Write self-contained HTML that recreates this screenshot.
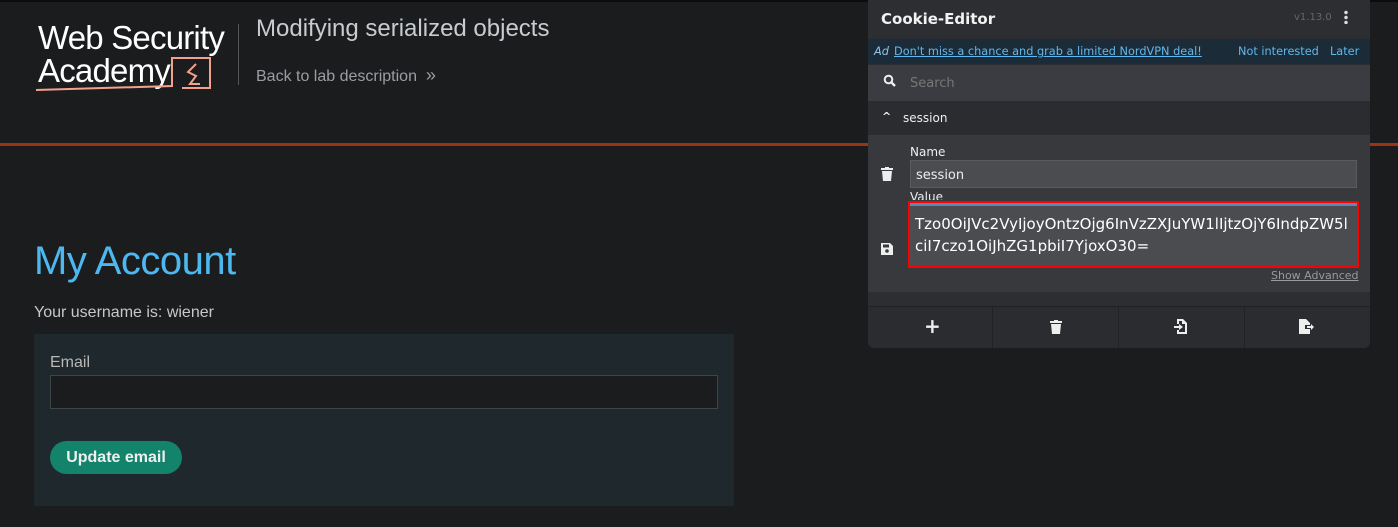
<!DOCTYPE html>
<html><head><meta charset="utf-8"><style>
*{box-sizing:border-box;margin:0;padding:0}
body{width:1398px;height:527px;background:#1b1c1e;font-family:"Liberation Sans",sans-serif;position:relative;overflow:hidden}
.abs{position:absolute}
.ce{font-family:"DejaVu Sans","Liberation Sans",sans-serif}
</style></head><body>
<div class="abs" style="left:0;top:0;width:1398px;height:2px;background:#0c0c0d"></div>
<!-- logo -->
<div class="abs" style="left:38px;top:21px;color:#fff;font-size:33px;letter-spacing:-0.8px;line-height:33px">Web Security<br>Academy</div>
<svg class="abs" style="left:34px;top:56px" width="190" height="38" viewBox="0 0 190 38">
<path d="M2 34 Q60 32 138 30 L138 2 L176 2 L176 32 L148 32" fill="none" stroke="#f3a08c" stroke-width="2"/>
<path d="M162 8 L154 16 L162 20 L156 28 L166 28" fill="none" stroke="#f3a08c" stroke-width="2"/>
</svg>
<div class="abs" style="left:238px;top:24px;width:1px;height:61px;background:#555"></div>
<div class="abs" style="left:256px;top:15px;color:#c8ccd0;font-size:24px">Modifying serialized objects</div>
<div class="abs" style="left:256px;top:65px;color:#9a9ea3;font-size:16px">Back to lab description &nbsp;<span style="font-size:18px">»</span></div>
<div class="abs" style="left:0;top:143px;width:1398px;height:3px;background:#9c3410"></div>
<!-- content -->
<div class="abs" style="left:34px;top:239px;color:#4db8ef;font-size:40px;letter-spacing:-0.5px">My Account</div>
<div class="abs" style="left:34px;top:304px;color:#c8c8c8;font-size:16px">Your username is: wiener</div>
<div class="abs" style="left:34px;top:334px;width:700px;height:172px;background:#1f282d"></div>
<div class="abs" style="left:50px;top:354px;color:#b8b8b8;font-size:16px">Email</div>
<div class="abs" style="left:50px;top:375px;width:668px;height:34px;background:#1b1c1e;border:1px solid #3f4446"></div>
<div class="abs" style="left:50px;top:441px;width:132px;height:33px;background:#13836c;border-radius:17px;color:#f0f0f0;font-weight:bold;font-size:16px;text-align:center;line-height:34px">Update email</div>
<!-- cookie editor -->
<div class="abs ce" style="left:868px;top:0;width:502px;height:348px;background:#2d2e32;border-radius:0 0 6px 6px;overflow:hidden">
 <div class="abs" style="left:13px;top:10px;color:#f2f2f2;font-weight:bold;font-size:15px">Cookie-Editor</div>
 <div class="abs" style="left:426px;top:12px;color:#666;font-size:10px">v1.13.0</div>
 <div class="abs" style="left:476px;top:10px;width:4px;height:14px;background:radial-gradient(circle,#ddd 1.5px,transparent 2px) 0 0/4px 5px"></div>
 <div class="abs" style="left:0;top:39px;width:502px;height:25px;background:#1b2b38;font-size:11.3px;line-height:25px">
  <span class="abs" style="left:6px;color:#8fc5ea;font-style:italic">Ad</span>
  <span class="abs" style="left:26px;color:#61b8ec;text-decoration:underline">Don't miss a chance and grab a limited NordVPN deal!</span>
  <span class="abs" style="left:370px;color:#61b8ec">Not interested</span>
  <span class="abs" style="left:462px;color:#61b8ec">Later</span>
 </div>
 <div class="abs" style="left:0;top:65px;width:502px;height:36px;background:#3a3c41"></div>
 <svg class="abs" style="left:15px;top:74px" width="14" height="14" viewBox="0 0 14 14"><circle cx="5.5" cy="5.5" r="3.8" fill="none" stroke="#eee" stroke-width="2"/><path d="M8.5 8.5L12 12" stroke="#eee" stroke-width="2.4"/></svg>
 <div class="abs" style="left:42px;top:76px;color:#777;font-size:13px">Search</div>
 <div class="abs" style="left:0;top:101px;width:502px;height:34px;background:#2b2c30"></div>
 <div class="abs" style="left:14px;top:110px;color:#eee;font-size:11px;font-weight:bold">^</div>
 <div class="abs" style="left:35px;top:111px;color:#eee;font-size:12px">session</div>
 <div class="abs" style="left:0;top:135px;width:502px;height:157px;background:#38393d"></div>
 <div class="abs" style="left:42px;top:145px;color:#eee;font-size:12px">Name</div>
 <div class="abs" style="left:42px;top:160px;width:447px;height:28px;background:#4b4c50;border:1px solid #5a5b5f;color:#eee;font-size:13px;padding:7px 5px">session</div>
 <div class="abs" style="left:42px;top:190px;color:#eee;font-size:12px;height:10px;overflow:hidden">Value</div>
 <div class="abs" style="left:40px;top:201px;width:451px;height:67px;background:#4b4c50;border:2px solid #f00;color:#fff;font-size:15px;line-height:22px;padding:10px 5px;word-break:break-all;box-shadow:inset 0 3px 0 #5d87b8">Tzo0OiJVc2VyIjoyOntzOjg6InVzZXJuYW1lIjtzOjY6IndpZW5lciI7czo1OiJhZG1pbiI7YjoxO30=</div>
 <div class="abs" style="left:403px;top:269px;color:#999;font-size:11px;text-decoration:underline">Show Advanced</div>
 <svg class="abs" style="left:13px;top:167px" width="12" height="14" viewBox="0 0 12 14"><rect x="0" y="1" width="12" height="2" fill="#eee"/><rect x="4" y="0" width="4" height="2" fill="#eee"/><path d="M1 4h10l-1 10H2z" fill="#eee"/></svg>
 <svg class="abs" style="left:13px;top:243px" width="12" height="12" viewBox="0 0 12 12"><path d="M0 0h9l3 3v9H0z" fill="#eee"/><rect x="2" y="1.5" width="6" height="3" fill="#38393d"/><circle cx="6" cy="8" r="1.8" fill="#38393d"/></svg>
 <div class="abs" style="left:0;top:306px;width:502px;height:42px;background:#2b2c30;border-top:1px solid #222"></div>
 <div class="abs" style="left:124px;top:307px;width:1px;height:41px;background:#222"></div>
 <div class="abs" style="left:250px;top:307px;width:1px;height:41px;background:#222"></div>
 <div class="abs" style="left:376px;top:307px;width:1px;height:41px;background:#222"></div>
 <div class="abs" style="left:56px;top:314px;color:#eee;font-size:20px;font-weight:bold">+</div>
 <svg class="abs" style="left:182px;top:320px" width="12" height="14" viewBox="0 0 12 14"><rect x="0" y="1" width="12" height="2" fill="#eee"/><rect x="4" y="0" width="4" height="2" fill="#eee"/><path d="M1 4h10l-1 10H2z" fill="#eee"/></svg>
 <svg class="abs" style="left:306px;top:319px" width="14" height="15" viewBox="0 0 14 15"><path d="M3 0h6l4 4v11H3v-4h2v2h6V5H8V2H5v3H3z" fill="#eee"/><path d="M0 7h5V5l4 3-4 3V9H0z" fill="#eee"/></svg>
 <svg class="abs" style="left:431px;top:319px" width="15" height="15" viewBox="0 0 15 15"><path d="M0 0h7l4 4v2H6v4h5v5H0z" fill="#eee"/><path d="M8 7h4V5l3 3-3 3V9H8z" fill="#eee"/></svg>
</div>
<div class="abs" style="left:1370px;top:0;width:28px;height:2px;background:#0c0c0d"></div>
</body></html>
